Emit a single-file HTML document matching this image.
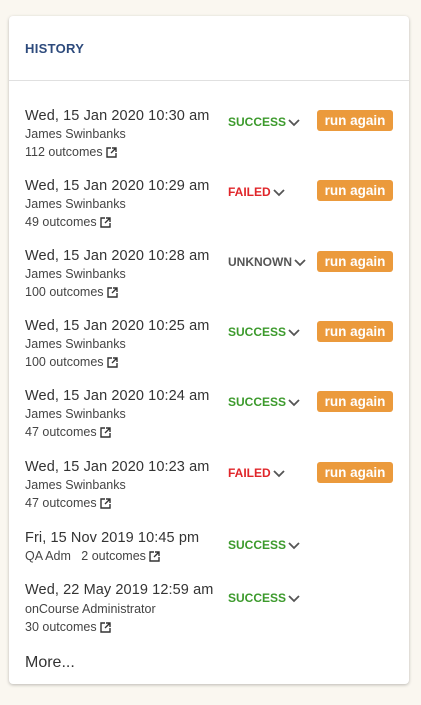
<!DOCTYPE html>
<html><head><meta charset="utf-8"><style>
*{margin:0;padding:0;box-sizing:border-box}
body{width:421px;height:705px;background:#faf7f0;font-family:"Liberation Sans",sans-serif;position:relative;overflow:hidden}
.card{position:absolute;left:9px;top:16px;width:400px;height:668px;background:#fff;border-radius:4px;box-shadow:0 1px 3px rgba(0,0,0,.25)}
.h{position:absolute;left:25px;top:41px;font-size:13px;font-weight:bold;color:#2d4a7c;letter-spacing:.3px}
.div{position:absolute;left:9px;width:400px;top:80px;height:1px;background:#e0e0e0}
.t{position:absolute;left:25px;white-space:nowrap;color:#333;line-height:18px}
.d{font-size:14.5px;letter-spacing:.1px}
.s{font-size:12.5px;color:#444}
.st{position:absolute;left:228px;font-size:12px;font-weight:bold;white-space:nowrap;line-height:16px}
.st svg{vertical-align:-3px;margin-left:1px}
.ok{color:#3c9a2c}.f{color:#e0262a}.u{color:#555}
.b{position:absolute;left:317px;width:76px;height:21px;background:#eb9a3c;color:#fff;border-radius:3px;font-size:13.5px;font-weight:bold;text-align:center;line-height:21px}
.ic{display:inline-block;vertical-align:-2px;margin-left:3px}
</style></head><body>
<div class="card"></div>
<div class="h">HISTORY</div>
<div class="div"></div>

<div class="t d" style="top:107px">Wed, 15 Jan 2020 10:30 am</div>
<div class="t s" style="top:125px">James Swinbanks</div>
<div class="t s" style="top:143px">112 outcomes<svg class="ic" width="11" height="11" viewBox="0 0 11 11"><path d="M5 1H1v9h9V6M6 1h4v4M10 1 5 6" fill="none" stroke="#333" stroke-width="1.4"/></svg></div>
<div class="st ok" style="top:114px">SUCCESS<svg width="14" height="14" viewBox="0 0 14 14"><path d="M2 5l5 5 5-5" fill="none" stroke="#555" stroke-width="1.8"/></svg></div>
<div class="b" style="top:110px">run again</div>

<div class="t d" style="top:177px">Wed, 15 Jan 2020 10:29 am</div>
<div class="t s" style="top:195px">James Swinbanks</div>
<div class="t s" style="top:213px">49 outcomes<svg class="ic" width="11" height="11" viewBox="0 0 11 11"><path d="M5 1H1v9h9V6M6 1h4v4M10 1 5 6" fill="none" stroke="#333" stroke-width="1.4"/></svg></div>
<div class="st f" style="top:184px">FAILED<svg width="14" height="14" viewBox="0 0 14 14"><path d="M2 5l5 5 5-5" fill="none" stroke="#555" stroke-width="1.8"/></svg></div>
<div class="b" style="top:180px">run again</div>

<div class="t d" style="top:247px">Wed, 15 Jan 2020 10:28 am</div>
<div class="t s" style="top:265px">James Swinbanks</div>
<div class="t s" style="top:283px">100 outcomes<svg class="ic" width="11" height="11" viewBox="0 0 11 11"><path d="M5 1H1v9h9V6M6 1h4v4M10 1 5 6" fill="none" stroke="#333" stroke-width="1.4"/></svg></div>
<div class="st u" style="top:254px">UNKNOWN<svg width="14" height="14" viewBox="0 0 14 14"><path d="M2 5l5 5 5-5" fill="none" stroke="#555" stroke-width="1.8"/></svg></div>
<div class="b" style="top:251px">run again</div>

<div class="t d" style="top:317px">Wed, 15 Jan 2020 10:25 am</div>
<div class="t s" style="top:335px">James Swinbanks</div>
<div class="t s" style="top:353px">100 outcomes<svg class="ic" width="11" height="11" viewBox="0 0 11 11"><path d="M5 1H1v9h9V6M6 1h4v4M10 1 5 6" fill="none" stroke="#333" stroke-width="1.4"/></svg></div>
<div class="st ok" style="top:324px">SUCCESS<svg width="14" height="14" viewBox="0 0 14 14"><path d="M2 5l5 5 5-5" fill="none" stroke="#555" stroke-width="1.8"/></svg></div>
<div class="b" style="top:321px">run again</div>

<div class="t d" style="top:387px">Wed, 15 Jan 2020 10:24 am</div>
<div class="t s" style="top:405px">James Swinbanks</div>
<div class="t s" style="top:423px">47 outcomes<svg class="ic" width="11" height="11" viewBox="0 0 11 11"><path d="M5 1H1v9h9V6M6 1h4v4M10 1 5 6" fill="none" stroke="#333" stroke-width="1.4"/></svg></div>
<div class="st ok" style="top:394px">SUCCESS<svg width="14" height="14" viewBox="0 0 14 14"><path d="M2 5l5 5 5-5" fill="none" stroke="#555" stroke-width="1.8"/></svg></div>
<div class="b" style="top:391px">run again</div>

<div class="t d" style="top:458px">Wed, 15 Jan 2020 10:23 am</div>
<div class="t s" style="top:476px">James Swinbanks</div>
<div class="t s" style="top:494px">47 outcomes<svg class="ic" width="11" height="11" viewBox="0 0 11 11"><path d="M5 1H1v9h9V6M6 1h4v4M10 1 5 6" fill="none" stroke="#333" stroke-width="1.4"/></svg></div>
<div class="st f" style="top:465px">FAILED<svg width="14" height="14" viewBox="0 0 14 14"><path d="M2 5l5 5 5-5" fill="none" stroke="#555" stroke-width="1.8"/></svg></div>
<div class="b" style="top:462px">run again</div>

<div class="t d" style="top:529px">Fri, 15 Nov 2019 10:45 pm</div>
<div class="t s" style="top:547px">QA Adm &nbsp;&nbsp;2 outcomes<svg class="ic" width="11" height="11" viewBox="0 0 11 11"><path d="M5 1H1v9h9V6M6 1h4v4M10 1 5 6" fill="none" stroke="#333" stroke-width="1.4"/></svg></div>
<div class="st ok" style="top:537px">SUCCESS<svg width="14" height="14" viewBox="0 0 14 14"><path d="M2 5l5 5 5-5" fill="none" stroke="#555" stroke-width="1.8"/></svg></div>

<div class="t d" style="top:581px">Wed, 22 May 2019 12:59 am</div>
<div class="t s" style="top:600px">onCourse Administrator</div>
<div class="t s" style="top:618px">30 outcomes<svg class="ic" width="11" height="11" viewBox="0 0 11 11"><path d="M5 1H1v9h9V6M6 1h4v4M10 1 5 6" fill="none" stroke="#333" stroke-width="1.4"/></svg></div>
<div class="st ok" style="top:590px">SUCCESS<svg width="14" height="14" viewBox="0 0 14 14"><path d="M2 5l5 5 5-5" fill="none" stroke="#555" stroke-width="1.8"/></svg></div>

<div class="t" style="top:654px;font-size:16px;color:#333">More...</div>
</body></html>
